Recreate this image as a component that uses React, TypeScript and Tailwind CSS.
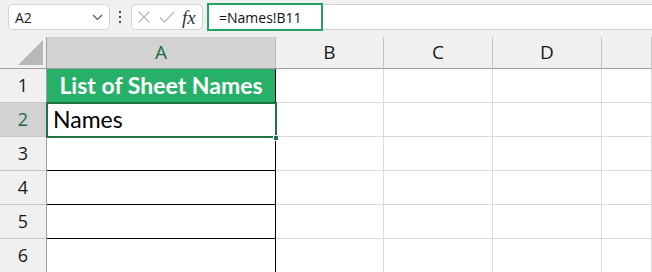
import React from "react";

const cols = ["A", "B", "C", "D", ""];
const rows = [1, 2, 3, 4, 5, 6];

const ui = { fontFamily: '"Open Sans", "Noto Sans", sans-serif' };
const cellFont = { fontFamily: 'Lato, "Liberation Sans", sans-serif' };

function Toolbar() {
  return (
    <div className="flex h-[37px] items-start bg-[#f0f0f0] pt-[4px]" style={ui}>
      <div className="ml-[8px] flex h-[26px] w-[102px] items-center justify-between rounded-[5px] border border-[#d4d4d4] bg-white pl-[6px] pr-[6px]">
        <span className="text-[14px] text-[#1a1a1a]">A2</span>
        <svg width="11" height="7" viewBox="0 0 11 7">
          <path d="M1 1l4.5 4.5L10 1" fill="none" stroke="#555" strokeWidth="1.2" />
        </svg>
      </div>
      <div className="flex h-[26px] w-[21px] flex-col items-center justify-center gap-[3px] pr-[2px]">
        <span className="h-[2px] w-[2px] bg-[#444]" />
        <span className="h-[2px] w-[2px] bg-[#444]" />
        <span className="h-[2px] w-[2px] bg-[#444]" />
      </div>
      <div className="flex h-[26px] w-[72px] items-center rounded-[5px] border border-[#d4d4d4] bg-white pl-[5px]">
        <svg width="14" height="14" viewBox="0 0 14 14">
          <path d="M1.5 1.5l11 11M12.5 1.5l-11 11" stroke="#b5b5b5" strokeWidth="1.1" />
        </svg>
        <svg width="16" height="14" viewBox="0 0 16 14" className="ml-[8px]">
          <path d="M1 7.5l4.5 4.5L15 2" fill="none" stroke="#b5b5b5" strokeWidth="1.1" />
        </svg>
        <span
          className="ml-[7px] text-[19px] italic leading-none text-[#333]"
          style={{ fontFamily: '"Liberation Serif", serif' }}
        >
          fx
        </span>
      </div>
      <div className="ml-[4px] flex h-[26px] flex-1 items-center border-y border-[#d0d0d0] bg-white">
        <div className="-my-[1px] flex h-[28px] w-[116px] items-center border-2 border-[#21a366] pl-[10px] text-[14px] text-[#111]">
          =Names!B11
        </div>
      </div>
    </div>
  );
}

function App() {
  return (
    <div className="h-[272px] w-[652px] overflow-hidden bg-[#f0f0f0]">
      <Toolbar />
      <div className="relative grid grid-cols-[47px_229px_108px_109px_109px_1fr] grid-rows-[32px_repeat(6,34px)] bg-white">
        {/* corner */}
        <div className="flex items-end justify-end border-r border-b border-[#9f9f9f] bg-[#f0f0f0] pr-[3px] pb-[3px]">
          <svg width="25" height="25" viewBox="0 0 25 25">
            <path d="M25 0V25H0Z" fill="#b8b8b8" />
          </svg>
        </div>
        {cols.map((c, i) => (
          <div
            key={c + i}
            className={`flex items-center justify-center border-b border-[#9f9f9f] text-[19px] ${
              i === 0 ? "border-r border-r-[#bdbdbd] bg-[#d2d2d2] text-[#1e6b41]" : "border-r border-r-[#c6c6c6] bg-[#f0f0f0] text-[#1a1a1a]"
            }`}
            style={ui}
          >
            {c}
          </div>
        ))}
        {rows.map((r) => (
          <React.Fragment key={r}>
            <div
              className={`flex items-center justify-center border-r border-b border-r-[#9f9f9f] border-b-[#c6c6c6] text-[18px] ${
                r === 2 ? "bg-[#d2d2d2] text-[#1e6b41]" : "bg-[#f0f0f0] text-[#1a1a1a]"
              }`}
              style={ui}
            >
              {r}
            </div>
            {r === 1 ? (
              <div
                className="flex items-center justify-center border-r border-b border-black bg-[#27b168] text-[23px] font-bold text-white"
                style={cellFont}
              >
                List of Sheet Names
              </div>
            ) : r === 2 ? (
              <div className="flex items-center border-r border-b border-black pl-[6px] text-[23px] text-black" style={cellFont}>
                Names
              </div>
            ) : (
              <div className="border-r border-b border-black" />
            )}
            {[0, 1, 2, 3].map((k) => (
              <div key={k} className="border-r border-b border-[#dadada]" />
            ))}
          </React.Fragment>
        ))}
        {/* selection on A2 */}
        <div className="pointer-events-none absolute top-[65px] left-[46px] h-[36px] w-[231px] border-2 border-[#217346]" />
        <div className="pointer-events-none absolute top-[98px] left-[273px] h-[6px] w-[6px] border border-white bg-[#217346]" />
      </div>
    </div>
  );
}

export default App;
